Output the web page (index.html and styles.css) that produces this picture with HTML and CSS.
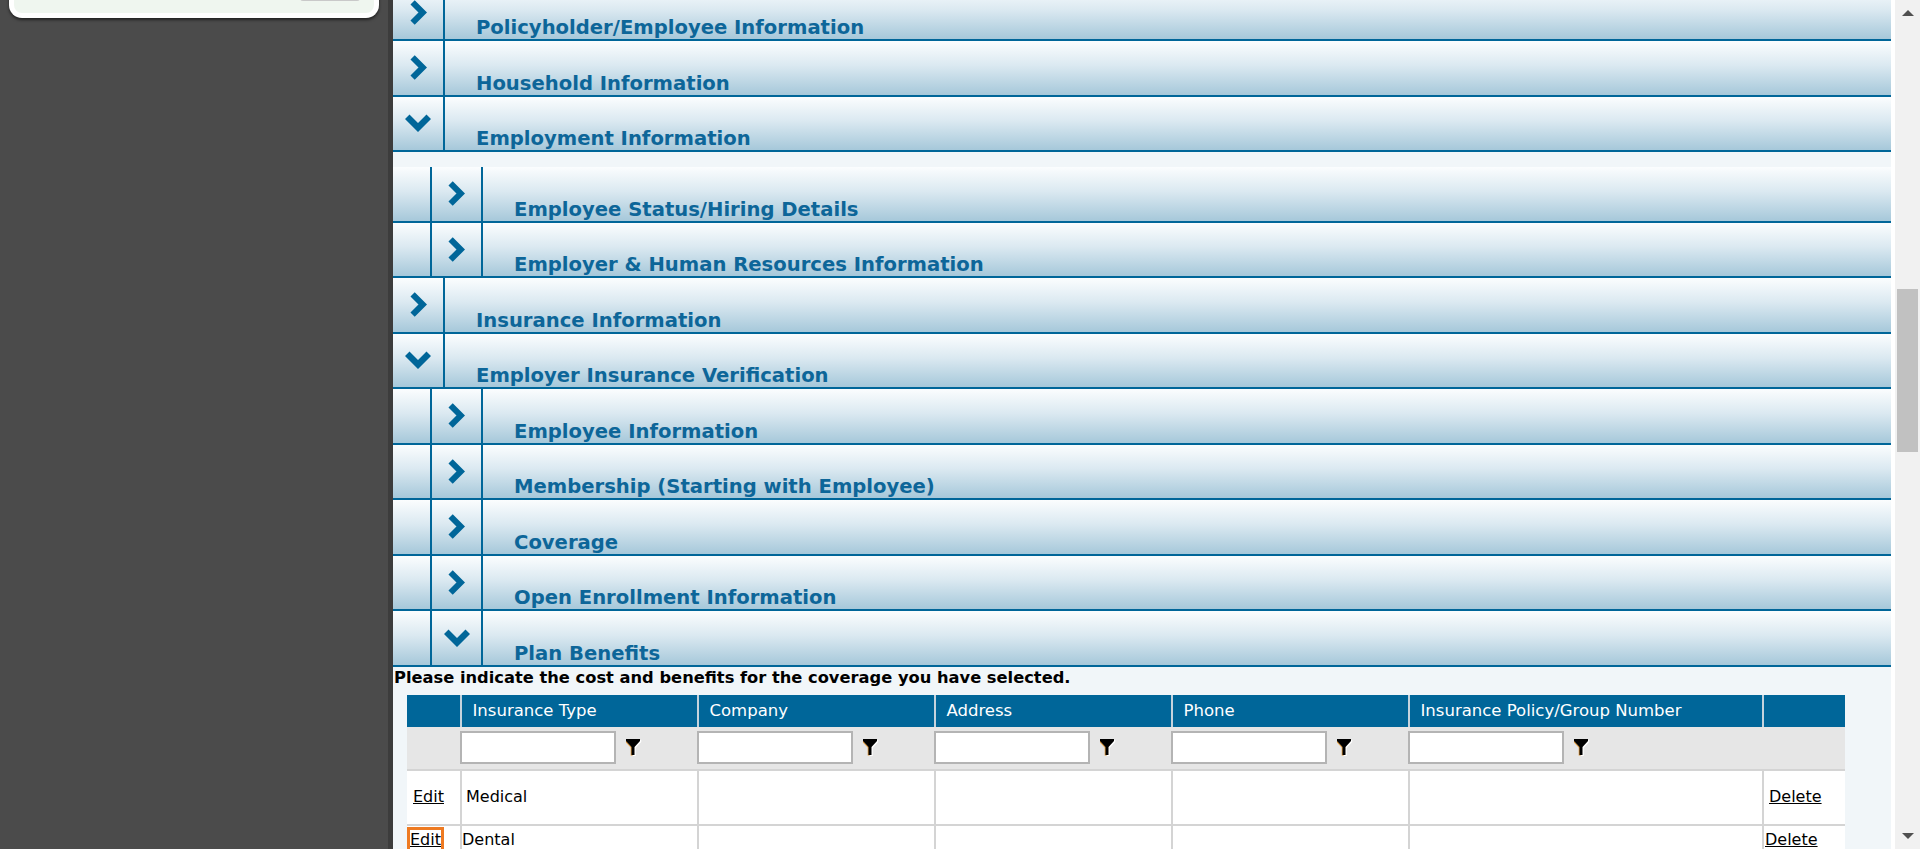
FILE: index.html
```html
<!DOCTYPE html>
<html>
<head>
<meta charset="utf-8">
<link rel="stylesheet" href="styles.css">
</head>
<body>
<div class="sidebar">
  <div class="card"><div class="card-btn"></div></div>
</div>
<div class="stripe"></div>
<div class="panel">
  <div class="acc">
    <div class="row"><div class="ico"><svg class="chev-r" viewBox="0 0 18 26"><polygon points="5,0 18,13 5,26 0.5,21.5 9,13 0.5,4.5"/></svg></div><div class="ttl">Policyholder/Employee Information</div></div>
    <div class="row"><div class="ico"><svg class="chev-r" viewBox="0 0 18 26"><polygon points="5,0 18,13 5,26 0.5,21.5 9,13 0.5,4.5"/></svg></div><div class="ttl">Household Information</div></div>
    <div class="row"><div class="ico"><svg class="chev-d" viewBox="0 0 26 18"><polygon points="0,5 4.5,0.5 13,9 21.5,0.5 26,5 13,18"/></svg></div><div class="ttl">Employment Information</div></div>
    <div class="sub gap">
      <div class="row"><div class="ind"></div><div class="ico ico-n"><svg class="chev-r" viewBox="0 0 18 26"><polygon points="5,0 18,13 5,26 0.5,21.5 9,13 0.5,4.5"/></svg></div><div class="ttl ttl-n">Employee Status/Hiring Details</div></div>
      <div class="row"><div class="ind"></div><div class="ico ico-n"><svg class="chev-r" viewBox="0 0 18 26"><polygon points="5,0 18,13 5,26 0.5,21.5 9,13 0.5,4.5"/></svg></div><div class="ttl ttl-n">Employer &amp; Human Resources Information</div></div>
    </div>
    <div class="row"><div class="ico"><svg class="chev-r" viewBox="0 0 18 26"><polygon points="5,0 18,13 5,26 0.5,21.5 9,13 0.5,4.5"/></svg></div><div class="ttl">Insurance Information</div></div>
    <div class="row"><div class="ico"><svg class="chev-d" viewBox="0 0 26 18"><polygon points="0,5 4.5,0.5 13,9 21.5,0.5 26,5 13,18"/></svg></div><div class="ttl">Employer Insurance Verification</div></div>
    <div class="sub">
      <div class="row"><div class="ind"></div><div class="ico ico-n"><svg class="chev-r" viewBox="0 0 18 26"><polygon points="5,0 18,13 5,26 0.5,21.5 9,13 0.5,4.5"/></svg></div><div class="ttl ttl-n">Employee Information</div></div>
      <div class="row"><div class="ind"></div><div class="ico ico-n"><svg class="chev-r" viewBox="0 0 18 26"><polygon points="5,0 18,13 5,26 0.5,21.5 9,13 0.5,4.5"/></svg></div><div class="ttl ttl-n">Membership (Starting with Employee)</div></div>
      <div class="row"><div class="ind"></div><div class="ico ico-n"><svg class="chev-r" viewBox="0 0 18 26"><polygon points="5,0 18,13 5,26 0.5,21.5 9,13 0.5,4.5"/></svg></div><div class="ttl ttl-n">Coverage</div></div>
      <div class="row"><div class="ind"></div><div class="ico ico-n"><svg class="chev-r" viewBox="0 0 18 26"><polygon points="5,0 18,13 5,26 0.5,21.5 9,13 0.5,4.5"/></svg></div><div class="ttl ttl-n">Open Enrollment Information</div></div>
      <div class="row"><div class="ind"></div><div class="ico ico-n"><svg class="chev-d" viewBox="0 0 26 18"><polygon points="0,5 4.5,0.5 13,9 21.5,0.5 26,5 13,18"/></svg></div><div class="ttl ttl-n">Plan Benefits</div></div>
    </div>
  </div>
  <p class="note">Please indicate the cost and benefits for the coverage you have selected.</p>
  <div class="grid">
    <div class="tr th">
      <div class="c"></div>
      <div class="c">Insurance Type</div>
      <div class="c">Company</div>
      <div class="c">Address</div>
      <div class="c">Phone</div>
      <div class="c">Insurance Policy/Group Number</div>
      <div class="c"></div>
    </div>
    <div class="tr tf">
      <div class="c"></div>
      <div class="c"><div class="inp"></div><svg class="fun" viewBox="0 0 16 17"><polygon fill="#e39a3a" points="0,0 14,0 14,2 8.5,8 8.5,16 5.5,16 5.5,8 0,2" transform="translate(-0.8,0.6)"/><polygon fill="#ffffff" points="0,0 14,0 14,2 8.5,8 8.5,16 5.5,16 5.5,8 0,2" transform="translate(1.2,1)"/><polygon fill="#000" points="0,0 14,0 14,2 8.5,8 8.5,16 5.5,16 5.5,8 0,2"/></svg></div>
      <div class="c"><div class="inp"></div><svg class="fun" viewBox="0 0 16 17"><polygon fill="#e39a3a" points="0,0 14,0 14,2 8.5,8 8.5,16 5.5,16 5.5,8 0,2" transform="translate(-0.8,0.6)"/><polygon fill="#ffffff" points="0,0 14,0 14,2 8.5,8 8.5,16 5.5,16 5.5,8 0,2" transform="translate(1.2,1)"/><polygon fill="#000" points="0,0 14,0 14,2 8.5,8 8.5,16 5.5,16 5.5,8 0,2"/></svg></div>
      <div class="c"><div class="inp"></div><svg class="fun" viewBox="0 0 16 17"><polygon fill="#e39a3a" points="0,0 14,0 14,2 8.5,8 8.5,16 5.5,16 5.5,8 0,2" transform="translate(-0.8,0.6)"/><polygon fill="#ffffff" points="0,0 14,0 14,2 8.5,8 8.5,16 5.5,16 5.5,8 0,2" transform="translate(1.2,1)"/><polygon fill="#000" points="0,0 14,0 14,2 8.5,8 8.5,16 5.5,16 5.5,8 0,2"/></svg></div>
      <div class="c"><div class="inp"></div><svg class="fun" viewBox="0 0 16 17"><polygon fill="#e39a3a" points="0,0 14,0 14,2 8.5,8 8.5,16 5.5,16 5.5,8 0,2" transform="translate(-0.8,0.6)"/><polygon fill="#ffffff" points="0,0 14,0 14,2 8.5,8 8.5,16 5.5,16 5.5,8 0,2" transform="translate(1.2,1)"/><polygon fill="#000" points="0,0 14,0 14,2 8.5,8 8.5,16 5.5,16 5.5,8 0,2"/></svg></div>
      <div class="c"><div class="inp"></div><svg class="fun" viewBox="0 0 16 17"><polygon fill="#e39a3a" points="0,0 14,0 14,2 8.5,8 8.5,16 5.5,16 5.5,8 0,2" transform="translate(-0.8,0.6)"/><polygon fill="#ffffff" points="0,0 14,0 14,2 8.5,8 8.5,16 5.5,16 5.5,8 0,2" transform="translate(1.2,1)"/><polygon fill="#000" points="0,0 14,0 14,2 8.5,8 8.5,16 5.5,16 5.5,8 0,2"/></svg></div>
      <div class="c"></div>
    </div>
    <div class="tr td">
      <div class="c c-edit"><a href="#">Edit</a></div>
      <div class="c">Medical</div>
      <div class="c"></div>
      <div class="c"></div>
      <div class="c"></div>
      <div class="c"></div>
      <div class="c c-del"><a href="#">Delete</a></div>
    </div>
    <div class="tr td td2">
      <div class="c c-edit"><a href="#" class="focus">Edit</a></div>
      <div class="c">Dental</div>
      <div class="c"></div>
      <div class="c"></div>
      <div class="c"></div>
      <div class="c"></div>
      <div class="c c-del"><a href="#">Delete</a></div>
    </div>
  </div>
</div>
<div class="gutter"></div>
<div class="sb">
  <div class="sb-up"></div>
  <div class="sb-thumb"></div>
  <div class="sb-dn"></div>
</div>
</body>
</html>
```
FILE: styles.css
```css
html, body {
  margin: 0;
  padding: 0;
}
body {
  width: 1920px;
  height: 849px;
  overflow: hidden;
  display: flex;
  font-family: "DejaVu Sans", Verdana, sans-serif;
  background: #4b4b4b;
}
.sidebar {
  width: 388px;
  flex: none;
  background: #4b4b4b;
}
.card {
  margin: -30px 0 0 9px;
  width: 360px;
  height: 43px;
  background: #eff6ef;
  border: 5px solid #ffffff;
  border-top: 0;
  border-radius: 0 0 13px 13px;
  box-shadow: 0 2px 3px rgba(0, 0, 0, 0.55);
  display: flex;
  justify-content: flex-end;
  box-sizing: content-box;
}
.card-btn {
  width: 60px;
  height: 31px;
  margin-right: 14px;
  background: #c9c9c9;
  border-radius: 0 0 3px 3px;
}
.stripe {
  width: 5px;
  flex: none;
  background: #3c3c3c;
}
.panel {
  width: 1498px;
  flex: none;
  background: #f1f6f9;
  display: flex;
  flex-direction: column;
}
.gutter {
  width: 4px;
  flex: none;
  background: #ffffff;
}
.sb {
  width: 25px;
  flex: none;
  background: #f1f1f1;
  display: flex;
  flex-direction: column;
  align-items: center;
}
.sb-up {
  margin-top: 10px;
  width: 0;
  height: 0;
  border-left: 6px solid transparent;
  border-right: 6px solid transparent;
  border-bottom: 6px solid #505050;
}
.sb-thumb {
  margin-top: 273px;
  width: 21px;
  height: 163px;
  background: #c1c1c1;
}
.sb-dn {
  margin-top: auto;
  margin-bottom: 10px;
  width: 0;
  height: 0;
  border-left: 6px solid transparent;
  border-right: 6px solid transparent;
  border-top: 6px solid #505050;
}

/* accordion */
.acc {
  margin-top: -14.5px;
  display: flex;
  flex-direction: column;
}
.sub {
  display: flex;
  flex-direction: column;
}
.sub.gap {
  padding-top: 15px;
}
.row {
  height: 55.5px;
  box-sizing: border-box;
  border-bottom: 2px solid #006699;
  background: linear-gradient(to bottom, #fbfdfe 0%, #dbe9f1 45%, #a6c8da 100%);
  display: flex;
}
.ind {
  width: 37px;
  flex: none;
  border-right: 2px solid #006699;
}
.ico {
  width: 50px;
  flex: none;
  border-right: 2px solid #006699;
  display: flex;
  align-items: center;
  justify-content: center;
}
.ico-n {
  width: 49px;
}
.chev-r {
  width: 17px;
  height: 25px;
  fill: #006699;
}
.chev-d {
  width: 26px;
  height: 18px;
  fill: #006699;
}
.ttl {
  padding-left: 31px;
  display: flex;
  align-items: flex-end;
  font-weight: bold;
  font-size: 19.6px;
  line-height: 23px;
  color: #0d6699;
  white-space: nowrap;
}
.ttl-n {
  padding-left: 31px;
}

/* note */
.note {
  margin: 1px 0 0 1px;
  font-weight: bold;
  font-size: 16.3px;
  line-height: 20px;
  color: #000;
}

/* grid table */
.grid {
  margin: 7px 0 0 14px;
  width: 1438px;
  display: flex;
  flex-direction: column;
}
.tr {
  display: grid;
  grid-template-columns: 53px 237px 237px 237px 237px 354px 83px;
}
.th {
  height: 32px;
  background: #006699;
  color: #ffffff;
  font-size: 16.5px;
}
.th .c {
  display: flex;
  align-items: center;
  padding-left: 10.5px;
  border-left: 2px solid #c5d3dd;
  white-space: nowrap;
}
.th .c:first-child {
  border-left: 0;
}
.tf {
  height: 44px;
  box-sizing: border-box;
  background: #e6e6e6;
  border-bottom: 2px solid #d4d4d4;
}
.tf .c {
  display: flex;
  align-items: center;
}
.inp {
  width: 156px;
  height: 33px;
  box-sizing: border-box;
  border: 2px solid #b4b4b4;
  background: #ffffff;
}
.fun {
  width: 16px;
  height: 17px;
  margin-left: 10px;
}
.td {
  height: 55px;
  box-sizing: border-box;
  background: #ffffff;
  border-bottom: 2px solid #d4d4d4;
  font-size: 16px;
  line-height: 20px;
  color: #000;
}
.td .c {
  display: flex;
  align-items: center;
  padding-left: 4px;
  border-left: 2px solid #d4d4d4;
  white-space: nowrap;
}
.td .c:first-child {
  border-left: 0;
}
.td .c-edit {
  padding-left: 6px;
}
.td .c-del {
  padding-left: 5px;
}
.td a {
  color: #000;
  text-decoration: underline;
}
.td2 {
  height: 40px;
}
.td2 .c {
  align-items: flex-start;
  padding-top: 4px;
  padding-left: 0;
}
.td2 .c-edit {
  padding-left: 3px;
}
.td2 .c-del {
  padding-left: 1px;
}
.focus {
  outline: 3px solid #ee7a22;
}
```
